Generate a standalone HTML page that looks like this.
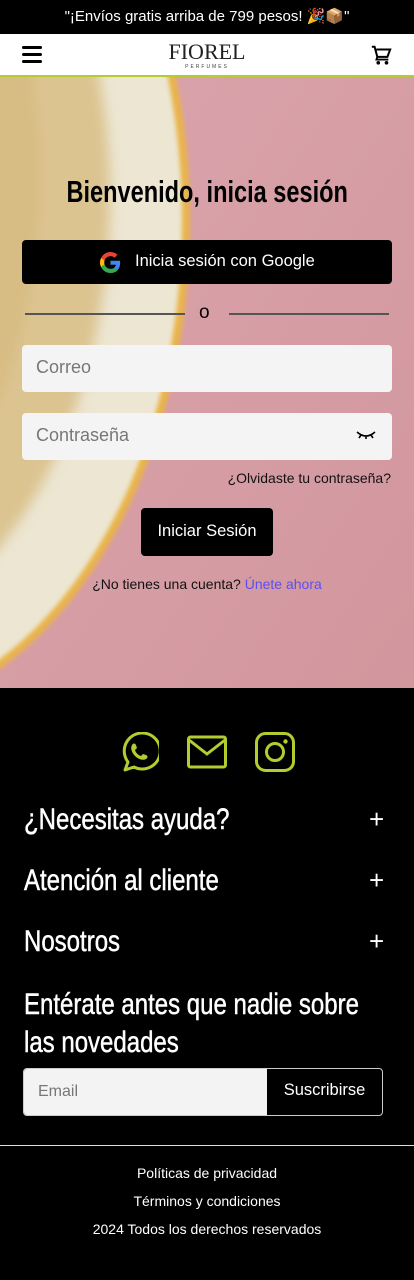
<!DOCTYPE html>
<html><head><meta charset="utf-8"><style>
*{margin:0;padding:0;box-sizing:border-box}
body{width:414px;height:1280px;overflow:hidden;font-family:"Liberation Sans",sans-serif;background:#000;position:relative}
.a{position:absolute}
.c{display:inline-block;transform:scaleX(.8);transform-origin:0 0;white-space:nowrap;-webkit-text-stroke:.5px #fff}
.cc{display:inline-block;transform:scaleX(.8);transform-origin:50% 0;white-space:nowrap}
</style></head><body>
<div class="a" style="left:0;top:0;width:414px;height:34px;background:#000;color:#fff;font-size:15px;text-align:center;line-height:33px">"¡Envíos gratis arriba de 799 pesos! 🎉📦"</div>
<div class="a" style="left:0;top:34px;width:414px;height:43px;background:#fff;border-bottom:2px solid #b5cc2e"></div>
<div class="a" style="left:22px;top:46px;width:20px;height:3px;background:#000;border-radius:2px"></div>
<div class="a" style="left:22px;top:53px;width:20px;height:3px;background:#000;border-radius:2px"></div>
<div class="a" style="left:22px;top:60px;width:20px;height:3px;background:#000;border-radius:2px"></div>
<div class="a" style="left:160px;top:40px;width:94px;text-align:center;font-family:'Liberation Serif',serif;font-size:22px;color:#222;line-height:24px">FIOREL</div>
<div class="a" style="left:164px;top:64px;width:86px;text-align:center;font-size:5px;letter-spacing:2px;color:#444">PERFUMES</div>
<svg class="a" style="left:370px;top:44px" width="22" height="22" viewBox="0 0 24 24"><path d="M2 3h3l3 11h11l3-8H7" fill="none" stroke="#000" stroke-width="2.2"/><path d="M8 14l-1 3h13" fill="none" stroke="#000" stroke-width="2"/><circle cx="9" cy="20.5" r="2" fill="#000"/><circle cx="18" cy="20.5" r="2" fill="#000"/></svg>

<svg class="a" style="left:0;top:77px" width="414" height="611">
<defs><linearGradient id="p" x1="0" y1="0" x2="1" y2="1"><stop offset="0" stop-color="#dba5ad"/><stop offset="1" stop-color="#d2969d"/></linearGradient>
<filter id="b"><feGaussianBlur stdDeviation="6"/></filter>
<filter id="b2"><feGaussianBlur stdDeviation="2"/></filter></defs>
<rect width="414" height="611" fill="url(#p)"/>
<ellipse cx="-150" cy="143" rx="340" ry="500" fill="#e9b449" filter="url(#b2)"/>
<ellipse cx="-150" cy="143" rx="332" ry="492" fill="#ece6d2" filter="url(#b2)"/>
<ellipse cx="-170" cy="120" rx="280" ry="440" fill="#dcc491" filter="url(#b)"/>
<ellipse cx="-200" cy="100" rx="240" ry="400" fill="#d4b77a" opacity=".6" filter="url(#b)"/>
</svg>

<div class="a" style="left:0;top:174px;width:414px;text-align:center;font-size:31px;font-weight:bold;color:#000"><span class="cc" style="transform:scaleX(.76)">Bienvenido, inicia sesión</span></div>
<div class="a" style="left:22px;top:240px;width:370px;height:44px;background:#000;border-radius:4px"></div>
<svg class="a" style="left:100px;top:252px" width="21" height="21" viewBox="0 0 48 48"><path fill="#EA4335" d="M24 9.5c3.5 0 6.6 1.2 9.1 3.6l6.8-6.8C35.8 2.4 30.3 0 24 0 14.6 0 6.6 5.4 2.6 13.3l7.9 6.1C12.4 13.7 17.7 9.5 24 9.5z"/><path fill="#4285F4" d="M46.1 24.5c0-1.6-.1-3.1-.4-4.5H24v9h12.4c-.5 2.9-2.2 5.4-4.6 7l7.6 5.9c4.4-4.1 6.7-10.1 6.7-17.4z"/><path fill="#FBBC05" d="M10.5 28.6c-.5-1.4-.8-3-.8-4.6s.3-3.2.8-4.6l-7.9-6.1C.9 16.5 0 20.1 0 24s.9 7.5 2.6 10.7l7.9-6.1z"/><path fill="#34A853" d="M24 48c6.5 0 11.9-2.100 15.9-5.8l-7.6-5.9c-2.1 1.4-4.9 2.3-8.3 2.3-6.3 0-11.6-4.2-13.5-9.9l-7.9 6.1C6.6 42.6 14.6 48 24 48z"/></svg>
<div class="a" style="left:135px;top:252px;color:#fff;font-size:16.5px">Inicia sesión con Google</div>
<div class="a" style="left:25px;top:313px;width:160px;height:2px;background:#555"></div>
<div class="a" style="left:229px;top:313px;width:160px;height:2px;background:#555"></div>
<div class="a" style="left:199px;top:302px;font-size:19px;color:#000">o</div>
<div class="a" style="left:22px;top:345px;width:370px;height:47px;background:#f4f4f4;border-radius:4px;color:#777;font-size:18px;padding:12px 14px">Correo</div>
<div class="a" style="left:22px;top:413px;width:370px;height:47px;background:#f4f4f4;border-radius:4px;color:#777;font-size:18px;padding:12px 14px">Contraseña</div>
<svg class="a" style="left:356px;top:430px" width="20" height="12" viewBox="0 0 20 12"><path d="M1 2q9 8 18 0M5 5l-2 3M10 6v3M15 5l2 3" fill="none" stroke="#000" stroke-width="1.6"/></svg>
<div class="a" style="left:200px;top:470px;width:191px;text-align:right;font-size:14px;color:#111">¿Olvidaste tu contraseña?</div>
<div class="a" style="left:141px;top:508px;width:132px;height:48px;background:#000;border-radius:4px;color:#fff;font-size:16.5px;text-align:center;line-height:47px">Iniciar Sesión</div>
<div class="a" style="left:0;top:576px;width:414px;text-align:center;font-size:14px;color:#111">¿No tienes una cuenta? <span style="color:#5b4ff0">Únete ahora</span></div>

<svg class="a" style="left:119px;top:732px" width="40" height="40" viewBox="0 0 40 40"><path d="M6 38l3-8A18 18 0 1 1 15 35z" fill="none" stroke="#b5cc2e" stroke-width="3" stroke-linejoin="round"/><path d="M13 13c1-2 3-2 4 0l1 3-2 2c1 3 3 5 6 6l2-2 3 1c2 1 2 3 0 4-3 2-8 0-11-3s-5-8-3-11z" fill="#b5cc2e"/></svg>
<svg class="a" style="left:187px;top:735px" width="40" height="34" viewBox="0 0 40 34"><rect x="1.5" y="2" width="37" height="30" rx="2" fill="none" stroke="#b5cc2e" stroke-width="3"/><path d="M2 5l18 14L38 5" fill="none" stroke="#b5cc2e" stroke-width="3"/></svg>
<svg class="a" style="left:255px;top:732px" width="40" height="40" viewBox="0 0 40 40"><rect x="1.5" y="1.5" width="37" height="37" rx="9" fill="none" stroke="#b5cc2e" stroke-width="3"/><circle cx="20" cy="20" r="8.5" fill="none" stroke="#b5cc2e" stroke-width="3"/><circle cx="30.5" cy="9.5" r="2.2" fill="#b5cc2e"/></svg>

<div class="a" style="left:24px;top:803px;color:#fff;font-size:30px"><span class="c">¿Necesitas ayuda?</span></div>
<div class="a" style="left:24px;top:864px;color:#fff;font-size:30px"><span class="c">Atención al cliente</span></div>
<div class="a" style="left:24px;top:925px;color:#fff;font-size:30px"><span class="c">Nosotros</span></div>
<div class="a" style="left:369px;top:804px;color:#fff;font-size:26px">+</div>
<div class="a" style="left:369px;top:865px;color:#fff;font-size:26px">+</div>
<div class="a" style="left:369px;top:926px;color:#fff;font-size:26px">+</div>
<div class="a" style="left:24px;top:986px;color:#fff;font-size:30px;line-height:38px"><span class="c">Entérate antes que nadie sobre<br>las novedades</span></div>
<div class="a" style="left:23px;top:1068px;width:360px;height:48px;border:1px solid #ccc;border-radius:4px;background:#000;overflow:hidden">
<div style="width:243px;height:46px;background:#f3f3f3;color:#777;font-size:16px;padding:14px 14px">Email</div></div>
<div class="a" style="left:267px;top:1081px;width:115px;text-align:center;color:#fff;font-size:16.5px">Suscribirse</div>
<div class="a" style="left:0;top:1145px;width:414px;height:1px;background:#ddd"></div>
<div class="a" style="left:0;top:1165px;width:414px;text-align:center;color:#fff;font-size:14px">Políticas de privacidad</div>
<div class="a" style="left:0;top:1193px;width:414px;text-align:center;color:#fff;font-size:14px">Términos y condiciones</div>
<div class="a" style="left:0;top:1221px;width:414px;text-align:center;color:#fff;font-size:14px">2024 Todos los derechos reservados</div>
</body></html>
